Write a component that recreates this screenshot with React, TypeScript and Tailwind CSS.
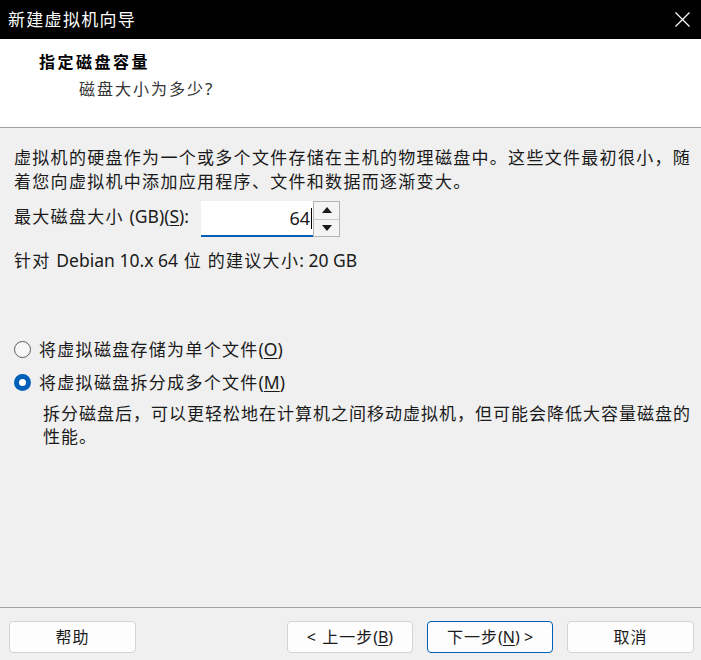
import React from "react";

const CJK = "font-['Noto_Sans','Noto_Sans_CJK_SC',sans-serif]";

function Radio({ checked }: { checked?: boolean }) {
  return checked ? (
    <span className="w-[17px] h-[17px] rounded-full bg-[#005fb8] flex items-center justify-center shrink-0">
      <span className="w-[7px] h-[7px] rounded-full bg-white" />
    </span>
  ) : (
    <span className="w-[17px] h-[17px] rounded-full border border-[#5c5c5c] bg-[#f7f7f7] shrink-0" />
  );
}

function Btn({ children, focus, w }: { children: React.ReactNode; focus?: boolean; w: string }) {
  return (
    <div
      className={
        "h-[32px] rounded-[4px] bg-[#fdfdfd] flex items-center justify-center text-[16px] tracking-[1px] text-[#1a1a1a] " +
        w +
        (focus ? " border border-[#005fb8]" : " border border-[#d3d3d3]")
      }
    >
      {children}
    </div>
  );
}

export default function App() {
  return (
    <div className={"w-[701px] h-[660px] flex flex-col bg-[#f0f0f0] text-[#1a1a1a] overflow-hidden " + CJK}>
      {/* Title bar */}
      <div className="h-[39px] bg-black flex items-center justify-between pl-[8px] pr-[10px] shrink-0">
        <span className="text-white text-[17px] tracking-[1.3px] leading-none">新建虚拟机向导</span>
        <svg width="15" height="15" viewBox="0 0 15 15" className="mr-[1px]">
          <path d="M0.5 0.5L14.5 14.5M14.5 0.5L0.5 14.5" stroke="white" strokeWidth="1.2" />
        </svg>
      </div>

      {/* Header */}
      <div className="h-[89px] bg-white border-b border-[#a0a0a0] shrink-0 pt-[11px] pl-[39px] flex flex-col gap-[3px]">
        <div className="text-[16px] leading-[24px] font-bold tracking-[2.5px] text-black">指定磁盘容量</div>
        <div className="text-[16px] leading-[24px] tracking-[2px] text-[#333] pl-[40px]">
          磁盘大小为多少<span className="tracking-normal text-[17px]">?</span>
        </div>
      </div>

      {/* Body */}
      <div className="flex-1 pl-[14px] pt-[18px] text-[17px] tracking-[1.3px] whitespace-nowrap">
        <div className="leading-[24px]">
          <div>虚拟机的硬盘作为一个或多个文件存储在主机的物理磁盘中。这些文件最初很小，随</div>
          <div>着您向虚拟机中添加应用程序、文件和数据而逐渐变大。</div>
        </div>

        <div className="mt-[7px] h-[36px] flex items-center">
          <span className="w-[187px] leading-[24px] pb-[5px]">
            最大磁盘大小{" "}
            <span className="tracking-normal text-[17.5px]">
              (GB)(<span className="underline underline-offset-2">S</span>):
            </span>
          </span>
          <div className="h-[36px] w-[112px] bg-white border-b-2 border-[#005fb8] flex items-center justify-end pr-[1px]">
            <span className="tracking-normal text-[18px]">64</span>
            <span className="w-[1px] h-[21px] bg-black ml-[1px]" />
          </div>
          <div className="h-[36px] w-[27px] border border-[#b5b5b5] bg-[#f4f4f4] flex flex-col">
            <div className="flex-1 flex items-center justify-center border-b border-[#c8c8c8]">
              <svg width="10" height="6" viewBox="0 0 10 6"><path d="M5 0L10 6H0Z" fill="#1a1a1a" /></svg>
            </div>
            <div className="flex-1 flex items-center justify-center">
              <svg width="10" height="6" viewBox="0 0 10 6"><path d="M0 0H10L5 6Z" fill="#1a1a1a" /></svg>
            </div>
          </div>
        </div>

        <div className="mt-[11px] leading-[24px]">
          针对 <span className="tracking-normal text-[17.5px]">Debian 10.x 64</span> 位 的建议大小
          <span className="tracking-normal text-[17.5px]">: 20 GB</span>
        </div>

        <div className="mt-[64px] flex items-center h-[24px]">
          <Radio />
          <span className="ml-[8px] leading-[24px]">
            将虚拟磁盘存储为单个文件
            <span className="tracking-normal text-[17.5px]">
              (<span className="underline underline-offset-2">O</span>)
            </span>
          </span>
        </div>
        <div className="mt-[9px] flex items-center h-[24px]">
          <Radio checked />
          <span className="ml-[8px] leading-[24px]">
            将虚拟磁盘拆分成多个文件
            <span className="tracking-normal text-[17.5px]">
              (<span className="underline underline-offset-2">M</span>)
            </span>
          </span>
        </div>
        <div className="mt-[8px] pl-[29px] leading-[23px] tracking-[1px]">
          <div>拆分磁盘后，可以更轻松地在计算机之间移动虚拟机，但可能会降低大容量磁盘的</div>
          <div>性能。</div>
        </div>
      </div>

      {/* Footer */}
      <div className="h-[53px] shrink-0 border-t border-[#a0a0a0] pt-[13px] pl-[9px] pr-[7px] flex items-start">
        <Btn w="w-[127px]">帮助</Btn>
        <div className="flex-1" />
        <div className="flex gap-[14px]">
          <Btn w="w-[126px]">
            &lt; 上一步
            <span className="tracking-normal">
              (<span className="underline underline-offset-2">B</span>)
            </span>
          </Btn>
          <Btn w="w-[126px]" focus>
            下一步
            <span className="tracking-normal">
              (<span className="underline underline-offset-2">N</span>) &gt;
            </span>
          </Btn>
          <Btn w="w-[127px]">取消</Btn>
        </div>
      </div>
    </div>
  );
}
